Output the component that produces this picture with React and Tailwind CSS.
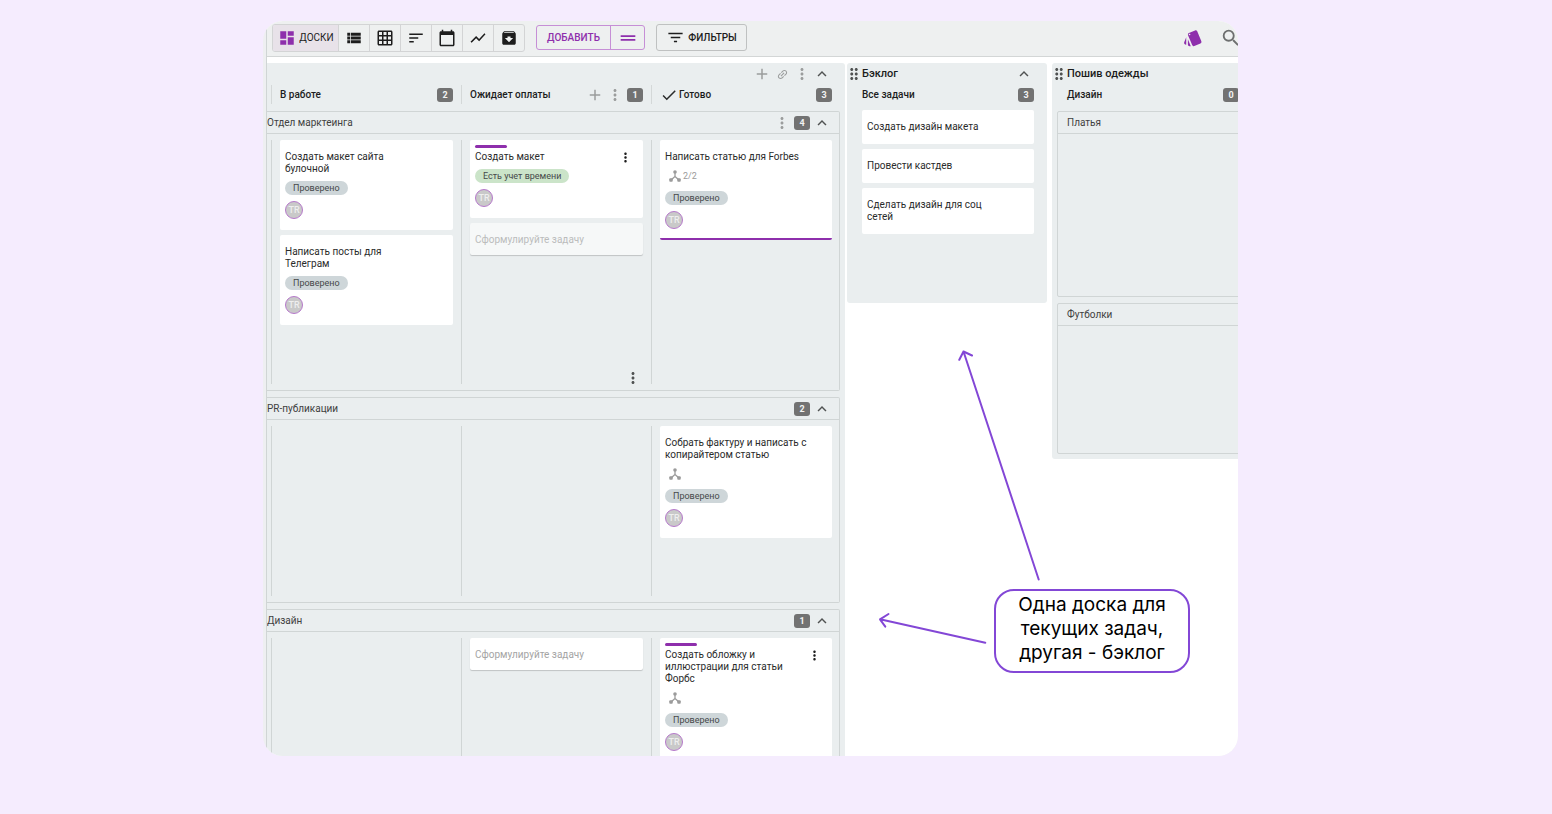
import {
  MdAdd,
  MdArchive,
  MdCalendarToday,
  MdCheck,
  MdDashboard,
  MdDragHandle,
  MdDragIndicator,
  MdExpandLess,
  MdFilterList,
  MdGridOn,
  MdLink,
  MdMoreVert,
  MdSearch,
  MdShowChart,
  MdSort,
  MdStyle,
  MdViewList,
} from 'react-icons/md';

const VIEWS = [
  { label: 'Список', Icon: MdViewList },
  { label: 'Таблица', Icon: MdGridOn },
  { label: 'Таймлайн', Icon: MdSort },
  { label: 'Календарь', Icon: MdCalendarToday },
  { label: 'Отчеты', Icon: MdShowChart },
  { label: 'Архив', Icon: MdArchive },
];

const CHECKED = { text: 'Проверено', kind: 'gray' };

const LANES = [
  {
    title: 'Отдел марктеинга',
    count: 4,
    menu: true,
    height: 'h-[244px]',
    columns: [
      {
        cards: [
          { title: 'Создать макет сайта булочной', tag: CHECKED },
          { title: 'Написать посты для Телеграм', tag: CHECKED },
        ],
      },
      {
        cards: [{ title: 'Создать макет', tag: { text: 'Есть учет времени', kind: 'green' }, bar: true }],
        draft: 'faded',
        menu: true,
      },
      {
        cards: [{ title: 'Написать статью для Forbes', tag: CHECKED, subtasks: '2/2', underline: true, wide: true }],
      },
    ],
  },
  {
    title: 'PR-публикации',
    count: 2,
    height: 'h-[170px]',
    columns: [
      { cards: [] },
      { cards: [] },
      { cards: [{ title: 'Собрать фактуру и написать с копирайтером статью', tag: CHECKED, subtasks: '', wide: true }] },
    ],
  },
  {
    title: 'Дизайн',
    count: 1,
    height: 'h-[170px]',
    columns: [
      { cards: [] },
      { cards: [], draft: 'solid' },
      { cards: [{ title: 'Создать обложку и иллюстрации для статьи Форбс', tag: CHECKED, subtasks: '', bar: true }] },
    ],
  },
];

const BACKLOG = ['Создать дизайн макета', 'Провести кастдев', 'Сделать дизайн для соц сетей'];

function IconButton({ label, children, className = 'text-[#9b9d9d]' }) {
  return (
    <button type="button" aria-label={label} className={`flex w-5 shrink-0 items-center justify-center ${className}`}>
      {children}
    </button>
  );
}

function Collapse() {
  return (
    <IconButton label="Свернуть" className="text-[#505252]">
      <MdExpandLess size={18} />
    </IconButton>
  );
}

function Badge({ children }) {
  return (
    <span className="flex h-[14px] w-4 shrink-0 items-center justify-center rounded-[3px] bg-[#727272] text-[9px] font-bold text-[#f2f2f2]">
      {children}
    </span>
  );
}

function SubtaskIcon() {
  return (
    <svg width="12" height="12" viewBox="0 0 24 24" fill="currentColor" aria-hidden="true">
      <circle cx="12" cy="4" r="3.6" />
      <path d="M12 4v9L4 20M12 13l8 7" fill="none" stroke="currentColor" strokeWidth="2.6" />
      <rect x="0.5" y="16.500" width="7" height="7" rx="2" />
      <rect x="16.500" y="16.500" width="7" height="7" rx="2" />
    </svg>
  );
}

function Card({ card }) {
  return (
    <article
      className={`relative rounded-[2px] bg-white px-[5px] pt-[11px] ${
        card.underline ? 'border-b-2 border-[#8e2fac] pb-[9px]' : 'pb-[11px]'
      }`}
    >
      {card.bar && <span className="absolute left-[5px] top-[5px] h-[3px] w-8 rounded-full bg-[#8e2fac]" />}
      <div className="flex items-start justify-between">
        <h4 className={card.wide ? 'max-w-[150px]' : 'max-w-[120px]'}>{card.title}</h4>
        {card.bar && (
          <button type="button" aria-label="Меню задачи" className="flex h-3 w-[26px] items-center justify-center text-[#1d1d1d]">
            <MdMoreVert size={15} className="shrink-0" />
          </button>
        )}
      </div>
      {card.subtasks !== undefined && (
        <div className="mt-1 flex h-[18px] items-center gap-[2px] pl-1 text-[9px] text-[#9b9b9b]">
          <SubtaskIcon />
          {card.subtasks}
        </div>
      )}
      <span
        className={`mt-[6px] flex h-[14px] w-fit items-center rounded-full px-2 text-[9px] text-[#46494a] ${
          card.tag.kind === 'green' ? 'bg-[#cbe4c9]' : 'bg-[#ced6d9]'
        }`}
      >
        {card.tag.text}
      </span>
      <span className="mt-[6px] flex size-[18px] items-center justify-center rounded-full border border-[#b679cb] bg-[#c9c9c9] text-[9px] font-medium text-[#eeeeee]">
        TR
      </span>
    </article>
  );
}

function Draft({ variant }) {
  return (
    <input
      type="text"
      aria-label="Новая задача"
      placeholder="Сформулируйте задачу"
      className={`h-8 w-full rounded-[2px] px-[5px] shadow-[0_1px_1px_rgba(0,0,0,0.18)] outline-none ${
        variant === 'faded' ? 'bg-[#f6f8f8] placeholder:text-[#bbbcbc]' : 'bg-white placeholder:text-[#a4a4a4]'
      }`}
    />
  );
}

function ColumnHeader({ title, count, check, tools, last }) {
  return (
    <div
      className={`flex h-[19px] items-center border-l border-[#d4d8d8] pl-2 ${
        last ? 'flex-1 pr-[7px]' : 'w-[190px] pr-2'
      }`}
    >
      {check && <MdCheck size={18} className="mr-px shrink-0" />}
      <h3 className="mr-auto whitespace-nowrap font-medium text-[#1c1d1d]">{title}</h3>
      {tools && (
        <div className="mr-[2px] flex">
          <IconButton label="Добавить задачу">
            <MdAdd size={18} />
          </IconButton>
          <IconButton label="Меню колонки">
            <MdMoreVert size={18} />
          </IconButton>
        </div>
      )}
      <Badge>{count}</Badge>
    </div>
  );
}

function Lane({ lane }) {
  return (
    <section className="rounded-r-[2px] border-y border-r border-[#d0d5d5]">
      <header className="flex h-[22px] items-center border-b border-[#d0d5d5] pr-[7px]">
        <h3 className="mr-auto text-[#3f4141]">{lane.title}</h3>
        {lane.menu && (
          <IconButton label="Меню дорожки">
            <MdMoreVert size={18} />
          </IconButton>
        )}
        <span className="mx-[2px]">
          <Badge>{lane.count}</Badge>
        </span>
        <Collapse />
      </header>
      <div className={`my-[6px] ml-1 flex ${lane.height}`}>
        {lane.columns.map((column, i) => (
          <div
            key={i}
            className={`flex flex-col gap-[5px] border-l border-[#d0d5d5] pl-2 ${
              i === 2 ? 'flex-1 pr-[7px]' : 'w-[190px] pr-2'
            }`}
          >
            {column.cards.map((card) => (
              <Card key={card.title} card={card} />
            ))}
            {column.draft && <Draft variant={column.draft} />}
            {column.menu && (
              <button
                type="button"
                aria-label="Меню ячейки"
                className="mt-auto flex h-3 w-5 items-center justify-center self-end text-[#505252]"
              >
                <MdMoreVert size={18} className="shrink-0" />
              </button>
            )}
          </div>
        ))}
      </div>
    </section>
  );
}

function BoardTitle({ children, collapsible }) {
  return (
    <header className="flex h-[22px] items-center pr-[13px]">
      <MdDragIndicator size={18} className="-ml-[2px] shrink-0 text-[#505252]" />
      <h2 className="-ml-[1px] mr-auto whitespace-nowrap text-[11px] font-medium text-[#1c1d1d]">{children}</h2>
      {collapsible && <Collapse />}
    </header>
  );
}

function Toolbar() {
  return (
    <nav className="flex h-9 shrink-0 items-center border-b border-[#d3d6d6] bg-[#eef0f0] pb-[2px] pl-[5px]">
      <div className="flex h-7 overflow-hidden rounded-[3px] border border-[#d3d4d5] text-[#1d1d1d]">
        <button type="button" className="flex w-[65px] items-center justify-center gap-[3px] bg-[#e8e2e9] pl-px">
          <MdDashboard size={18} className="text-[#8e2fac]" />
          ДОСКИ
        </button>
        {VIEWS.map(({ label, Icon }) => (
          <button
            key={label}
            type="button"
            aria-label={label}
            className="flex w-[31px] items-center justify-center border-l border-[#d3d4d5]"
          >
            <Icon size={18} />
          </button>
        ))}
      </div>
      <div className="ml-[11px] flex h-[25px] rounded-[3px] border border-[#c68fd6] font-medium text-[#8e2fac]">
        <button type="button" className="w-[73px]">
          ДОБАВИТЬ
        </button>
        <button
          type="button"
          aria-label="Быстрое добавление"
          className="flex w-[34px] items-center justify-center border-l border-[#c68fd6]"
        >
          <MdDragHandle size={22} />
        </button>
      </div>
      <button
        type="button"
        className="ml-[11px] flex h-[27px] w-[91px] items-center justify-center gap-[3px] rounded-[3px] border border-[#bfc1c1] font-medium text-[#1d1d1d]"
      >
        <MdFilterList size={19} />
        ФИЛЬТРЫ
      </button>
      <button type="button" aria-label="Карточки" className="ml-auto text-[#8e2fac]">
        <MdStyle size={20} />
      </button>
      <button type="button" aria-label="Поиск" className="-mr-[4px] ml-[17px] text-[#6d6f6f]">
        <MdSearch size={22} />
      </button>
    </nav>
  );
}

function MainBoard() {
  return (
    <section className="mr-[2px] w-[578px] shrink-0 self-stretch rounded-tr-[3px] bg-[#eaeeef] pr-[5px]">
      <header className="flex h-[22px] items-center justify-end pr-2">
        <IconButton label="Добавить колонку">
          <MdAdd size={18} />
        </IconButton>
        <IconButton label="Ссылка">
          <MdLink size={13} className="-rotate-45" />
        </IconButton>
        <IconButton label="Меню доски">
          <MdMoreVert size={18} />
        </IconButton>
        <Collapse />
      </header>
      <div className="ml-1 mr-px flex">
        <ColumnHeader title="В работе" count={2} />
        <ColumnHeader title="Ожидает оплаты" count={1} tools />
        <ColumnHeader title="Готово" count={3} check last />
      </div>
      <div className="mt-[7px] flex flex-col gap-[6px]">
        {LANES.map((lane) => (
          <Lane key={lane.title} lane={lane} />
        ))}
      </div>
    </section>
  );
}

function BacklogBoard() {
  return (
    <section className="mr-[5px] w-[200px] shrink-0 rounded-[3px] bg-[#eaeeef] pb-[69px]">
      <BoardTitle collapsible>Бэклог</BoardTitle>
      <div className="flex h-[19px] items-center justify-between pl-[15px] pr-[13px]">
        <h3 className="font-medium text-[#1c1d1d]">Все задачи</h3>
        <Badge>3</Badge>
      </div>
      <ul className="mt-[6px] flex flex-col gap-[5px] pl-[15px] pr-[13px]">
        {BACKLOG.map((task) => (
          <li key={task} className="rounded-[2px] bg-white px-[5px] py-[11px]">
            <p className="max-w-[120px]">{task}</p>
          </li>
        ))}
      </ul>
    </section>
  );
}

function ClothesBoard() {
  return (
    <section className="w-[200px] shrink-0 rounded-[3px] bg-[#eaeeef] pb-[5px]">
      <BoardTitle>Пошив одежды</BoardTitle>
      <div className="flex h-[19px] items-center justify-between pl-[15px] pr-[13px]">
        <h3 className="font-medium text-[#1c1d1d]">Дизайн</h3>
        <Badge>0</Badge>
      </div>
      <div className="mt-[7px] flex flex-col gap-[6px] pl-[5px]">
        <section className="h-[186px] rounded-l-[2px] border border-[#d0d5d5]">
          <h3 className="flex h-[22px] items-center border-b border-[#d0d5d5] pl-[9px] text-[#3f4141]">Платья</h3>
        </section>
        <section className="h-[151px] rounded-l-[2px] border border-[#d0d5d5]">
          <h3 className="flex h-[22px] items-center border-b border-[#d0d5d5] pl-[9px] text-[#3f4141]">Футболки</h3>
        </section>
      </div>
    </section>
  );
}

// Callout with two arrows, floats over the boards
function Callout() {
  return (
    <aside className="pointer-events-none absolute bottom-[83px] right-12 flex h-[328px] w-80 items-end justify-end">
      <svg
        className="absolute inset-0"
        width="320"
        height="328"
        viewBox="870 345 320 328"
        fill="none"
        stroke="#8347d6"
        strokeWidth="2"
        strokeLinecap="round"
        strokeLinejoin="round"
        aria-hidden="true"
      >
        <path d="M1038.700 579.500L963.500 351.500M959.300 359.800L963.500 351.500L972 355.500" />
        <path d="M985.300 642.700L880 619.300M888.500 614L880 619.300L885.300 626.700" />
      </svg>
      <p className="w-[196px] rounded-[20px] border-2 border-[#8347d6] bg-white px-4 pb-[6px] pt-[2px] text-center font-[Inter,'Open_Sans',sans-serif] text-[19px] leading-6 text-black">
        Одна доска для текущих задач, другая - бэклог
      </p>
    </aside>
  );
}

export default function App() {
  return (
    <div className="h-screen bg-[#f5ecfe] pb-[58px] pl-[263px] pr-[314px] pt-[21px] font-[Roboto,sans-serif] text-[10px] leading-3 text-[#2a2b2b]">
      <main className="relative h-full overflow-hidden rounded-[20px] bg-[#eeeff1] pl-[3px]">
        <div className="flex h-full flex-col border-l border-[#d0d5d5] bg-white">
          <Toolbar />
          <div className="flex min-h-0 flex-1 items-start overflow-hidden pt-[6px]">
            <MainBoard />
            <BacklogBoard />
            <ClothesBoard />
          </div>
        </div>
        <Callout />
      </main>
    </div>
  );
}
